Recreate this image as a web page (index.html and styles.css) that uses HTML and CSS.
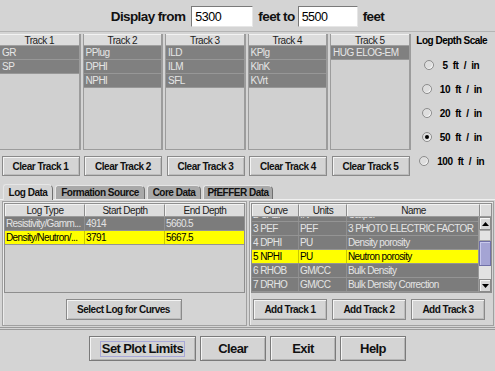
FILE: index.html
```html
<!DOCTYPE html>
<html>
<head>
<meta charset="utf-8">
<link rel="stylesheet" href="styles.css">
</head>
<body>
<div class="app">
  <div class="top">
    <span class="lbl l1">Display from</span>
    <div class="field">5300</div>
    <span class="lbl l2">feet to</span>
    <div class="field f2">5500</div>
    <span class="lbl l3">feet</span>
  </div>

  <div class="tracks">
    <div class="track">
      <div class="list">
        <div class="lhead">Track 1</div>
        <div class="lrow">GR</div>
        <div class="lrow">SP</div>
      </div>
      <button class="btn">Clear Track 1</button>
    </div>
    <div class="track">
      <div class="list">
        <div class="lhead">Track 2</div>
        <div class="lrow">PPlug</div>
        <div class="lrow">DPHI</div>
        <div class="lrow">NPHI</div>
      </div>
      <button class="btn">Clear Track 2</button>
    </div>
    <div class="track">
      <div class="list">
        <div class="lhead">Track 3</div>
        <div class="lrow">ILD</div>
        <div class="lrow">ILM</div>
        <div class="lrow">SFL</div>
      </div>
      <button class="btn">Clear Track 3</button>
    </div>
    <div class="track">
      <div class="list">
        <div class="lhead">Track 4</div>
        <div class="lrow">KPlg</div>
        <div class="lrow">KlnK</div>
        <div class="lrow">KVrt</div>
      </div>
      <button class="btn">Clear Track 4</button>
    </div>
    <div class="track">
      <div class="list">
        <div class="lhead">Track 5</div>
        <div class="lrow">HUG ELOG-EM</div>
      </div>
      <button class="btn">Clear Track 5</button>
    </div>
    <div class="scale">
      <div class="stitle">Log Depth Scale</div>
      <div class="radio"><span class="dot"></span><span class="rl">5 ft / in</span></div>
      <div class="radio"><span class="dot"></span><span class="rl">10 ft / in</span></div>
      <div class="radio"><span class="dot"></span><span class="rl">20 ft / in</span></div>
      <div class="radio"><span class="dot on"></span><span class="rl">50 ft / in</span></div>
      <div class="radio"><span class="dot"></span><span class="rl">100 ft / in</span></div>
    </div>
  </div>

  <div class="tabs">
    <div class="tab sel t1">Log Data</div>
    <div class="tab t2">Formation Source</div>
    <div class="tab t3">Core Data</div>
    <div class="tab t4">PfEFFER Data</div>
  </div>

  <div class="tabpanel">
    <div class="panel left">
      <div class="view lview">
        <div class="thead">
          <div class="th c1">Log Type</div>
          <div class="th c2">Start Depth</div>
          <div class="th c3">End Depth</div>
        </div>
        <div class="trow gray">
          <div class="td c1">Resistivity/Gamm...</div>
          <div class="td c2">4914</div>
          <div class="td c3">5660.5</div>
        </div>
        <div class="trow yel">
          <div class="td c1">Density/Neutron/...</div>
          <div class="td c2">3791</div>
          <div class="td c3">5667.5</div>
        </div>
      </div>
      <div class="bar center">
        <button class="btn sel-log">Select Log for Curves</button>
      </div>
    </div>
    <div class="panel right">
      <div class="view rview">
        <div class="thead">
          <div class="th k1">Curve</div>
          <div class="th k2">Units</div>
          <div class="th k3">Name</div>
          <div class="th k4"></div>
        </div>
        <div class="rbody">
          <div class="rows">
            <div class="rscroll">
              <div class="trow gray"><div class="td k1">2 CALI</div><div class="td k2">IN</div><div class="td k3">Caliper</div></div>
              <div class="trow gray"><div class="td k1">3 PEF</div><div class="td k2">PEF</div><div class="td k3">3 PHOTO ELECTRIC FACTOR</div></div>
              <div class="trow gray"><div class="td k1">4 DPHI</div><div class="td k2">PU</div><div class="td k3">Density porosity</div></div>
              <div class="trow yel"><div class="td k1">5 NPHI</div><div class="td k2">PU</div><div class="td k3">Neutron porosity</div></div>
              <div class="trow gray"><div class="td k1">6 RHOB</div><div class="td k2">GM/CC</div><div class="td k3">Bulk Density</div></div>
              <div class="trow gray"><div class="td k1">7 DRHO</div><div class="td k2">GM/CC</div><div class="td k3">Bulk Density Correction</div></div>
            </div>
          </div>
          <div class="sbar">
            <div class="sbtn"><svg width="7" height="4" viewBox="0 0 7 4"><path d="M0 4 L3.5 0 L7 4 Z" fill="#000"/></svg></div>
            <div class="strack">
              <div class="sbox"></div>
              <div class="thumb"></div>
              <div class="sbox2"></div>
            </div>
            <div class="sbtn"><svg width="7" height="4" viewBox="0 0 7 4"><path d="M0 0 L3.5 4 L7 0 Z" fill="#000"/></svg></div>
          </div>
        </div>
      </div>
      <div class="bar adds">
        <button class="btn add">Add Track 1</button>
        <button class="btn add">Add Track 2</button>
        <button class="btn add">Add Track 3</button>
      </div>
    </div>
  </div>

  <div class="bottom">
    <button class="bbtn w1"><span class="focus">Set Plot Limits</span></button>
    <button class="bbtn">Clear</button>
    <button class="bbtn">Exit</button>
    <button class="bbtn">Help</button>
  </div>
</div>
</body>
</html>
```

FILE: styles.css
```css
* { box-sizing: border-box; }
html, body { margin: 0; padding: 0; }
body {
  width: 495px;
  height: 371px;
  overflow: hidden;
  background: #d4d4d4;
  font-family: "Liberation Sans", Arial, sans-serif;
  font-size: 10px;
  letter-spacing: -0.5px;
  color: #000;
}
.app { width: 495px; height: 371px; }

/* top */
.top {
  height: 32px;
  padding-top: 2px;
  display: flex;
  align-items: center;
  justify-content: center;
  border-bottom: 1px solid #b4b4b4;
}
.lbl { font-size: 13.5px; font-weight: bold; color: #111; letter-spacing: -0.6px; }
.l1 { margin-right: 6px; }
.l2 { margin: 0 3px 0 5px; }
.l3 { margin-left: 5px; }
.field {
  width: 62px;
  height: 21px;
  background: #fff;
  border: 1px solid;
  border-color: #7a7a7a #e6e6e6 #e6e6e6 #7a7a7a;
  font-size: 12.5px;
  padding: 0 3px;
  display: flex;
  align-items: center;
}
.f2 { width: 60px; }

/* tracks */
.tracks {
  display: flex;
  gap: 2px;
  padding-top: 2px;
  height: 145px;
}
.track {
  width: 80.5px;
  display: flex;
  flex-direction: column;
}
.list {
  height: 116px;
  background: #d0d0d0;
  border: 1px solid #9c9c9c;
  border-top: none;
  border-right-width: 2px;
}
.track:first-child .list { border-left: none; }
.lhead {
  height: 12px;
  line-height: 11px;
  background: #dcdcdc;
  border-bottom: 1px solid #a0a0a0;
  border-top: 1px solid #f2f2f2;
  text-align: center;
  color: #222;
}
.lrow {
  height: 14px;
  line-height: 13px;
  background: #808080;
  color: #e6e6e6;
  padding-left: 2px;
  border-bottom: 1px solid #979797;
  white-space: nowrap;
  overflow: hidden;
}
.btn {
  font-family: inherit;
  font-size: 10px;
  letter-spacing: -0.5px;
  font-weight: bold;
  color: #111;
  background: #d4d4d4;
  border: 1px solid #8a8a8a;
  box-shadow: inset 1px 1px 0 #f4f4f4, inset -1px -1px 0 #bcbcbc;
  padding: 0;
  height: 20px;
  margin-top: 6px;
  cursor: default;
}
.track .btn { width: 78px; margin-left: 1.5px; }

.scale {
  flex: 1;
  margin-left: 3px;
  padding-right: 7px;
}
.stitle {
  height: 14px;
  line-height: 14px;
  font-weight: bold;
  text-align: center;
  margin-bottom: 5px;
  white-space: nowrap;
}
.radio {
  height: 24px;
  display: flex;
  align-items: center;
  justify-content: center;
  gap: 8px;
}
.dot {
  width: 10px;
  height: 10px;
  border-radius: 50%;
  border: 1px solid #8c8c8c;
  background: #dedede;
  box-shadow: inset -1px -1px 0 #f6f6f6;
  display: flex;
  align-items: center;
  justify-content: center;
}
.dot.on::after {
  content: "";
  width: 4px;
  height: 4px;
  border-radius: 50%;
  background: #000;
}
.rl { font-weight: bold; word-spacing: 3px; white-space: nowrap; }

/* tabs */
.tabs {
  display: flex;
  align-items: flex-end;
  gap: 2px;
  padding-left: 3px;
  height: 22px;
}
.tab {
  height: 14px;
  line-height: 13px;
  background: #a9a9a9;
  border: 1px solid;
  border-color: #e6e6e6 #707070 transparent #e6e6e6;
  border-bottom: none;
  border-radius: 3px 5px 0 0;
  font-weight: bold;
  text-align: center;
  color: #111;
  white-space: nowrap;
}
.tab.sel {
  height: 16px;
  line-height: 15px;
  background: #d4d4d4;
  margin-bottom: -1px;
  position: relative;
  z-index: 1;
}
.t1 { width: 50px; }
.t2 { width: 90px; }
.t3 { width: 54px; }
.t4 { width: 70px; }

.tabpanel {
  height: 131px;
  border-top: 1px solid #f0f0f0;
  border-bottom: 3px double #9a9a9a;
  padding: 1px 2px;
  display: flex;
  gap: 2px;
}
.panel {
  height: 125px;
  border: 1px solid #a0a0a0;
  box-shadow: inset 1px 1px 0 #ececec;
  padding: 1px;
  display: flex;
  flex-direction: column;
}
.left { width: 245px; }
.right { width: 245px; }
.view {
  height: 90px;
  border: 1px solid #8e8e8e;
  background: #d0d0d0;
  overflow: hidden;
}
.thead {
  display: flex;
  height: 13px;
  background: #d4d4d4;
  border-bottom: 1px solid #9a9a9a;
}
.th {
  height: 12px;
  line-height: 11px;
  background: #dcdcdc;
  border-top: 1px solid #f2f2f2;
  border-left: 1px solid #f2f2f2;
  border-right: 1px solid #8c8c8c;
  text-align: center;
  color: #222;
  flex-shrink: 0;
}
.trow {
  display: flex;
  height: 14px;
  line-height: 13px;
  border-bottom: 1px solid #949494;
}
.td {
  padding-left: 1px;
  white-space: nowrap;
  overflow: hidden;
  flex-shrink: 0;
  border-right: 1px solid #8f8f8f;
  letter-spacing: -0.6px;
}
.gray { background: #7c7c7c; color: #e4e4e4; }
.yel { background: #ffff00; color: #000; }
.yel .td { border-right-color: #c8c800; }
.c1 { width: 80px; }
.c2 { width: 80px; }
.c3 { width: 80px; }

.k1 { width: 47px; }
.k2 { width: 48px; }
.k3 { width: 133px; }
.k4 { width: 13px; }

.rbody { display: flex; height: 75px; }
.rows { width: 228px; height: 75px; overflow: hidden; }
.rscroll { margin-top: -9px; }
.sbar {
  width: 13px;
  height: 75px;
  display: flex;
  flex-direction: column;
  background: #dedede;
  border-left: 1px solid #9a9a9a;
}
.sbtn {
  height: 13px;
  background: #d8d8d8;
  border: 1px solid #8a8a8a;
  box-shadow: inset 1px 1px 0 #f6f6f6;
  display: flex;
  align-items: center;
  justify-content: center;
}
.strack { flex: 1; display: flex; flex-direction: column; }
.sbox { height: 11px; border: 1px solid #a8a8a8; background: #e2e2e2; }
.thumb {
  height: 25px;
  background: #a4a4d4;
  border: 1px solid #7070a8;
  box-shadow: inset 1px 1px 0 #c8c8ec;
}
.sbox2 { flex: 1; background: #e2e2e2; }

.bar { flex: 1; display: flex; align-items: flex-start; padding-top: 6px; }
.center { justify-content: center; }
.sel-log { width: 116px; height: 21px; margin-top: 0; margin-left: -2px; }
.adds { gap: 5px; padding-left: 2px; }
.add { width: 74px; height: 21px; margin-top: 0; }

/* bottom */
.bottom {
  display: flex;
  justify-content: center;
  gap: 4px;
  padding-top: 6px;
}
.bbtn {
  font-family: inherit;
  font-size: 13px;
  letter-spacing: -0.6px;
  font-weight: bold;
  color: #111;
  width: 66px;
  height: 25px;
  background: #d4d4d4;
  border: 1px solid #7a7a7a;
  box-shadow: inset 1px 1px 0 #f4f4f4, inset -1px -1px 0 #b4b4b4;
  padding: 0;
  display: flex;
  align-items: center;
  justify-content: center;
}
.w1 { width: 107px; }
.focus {
  border: 1px solid #a8a8d8;
  padding: 0 1px;
  line-height: 14px;
}
```
